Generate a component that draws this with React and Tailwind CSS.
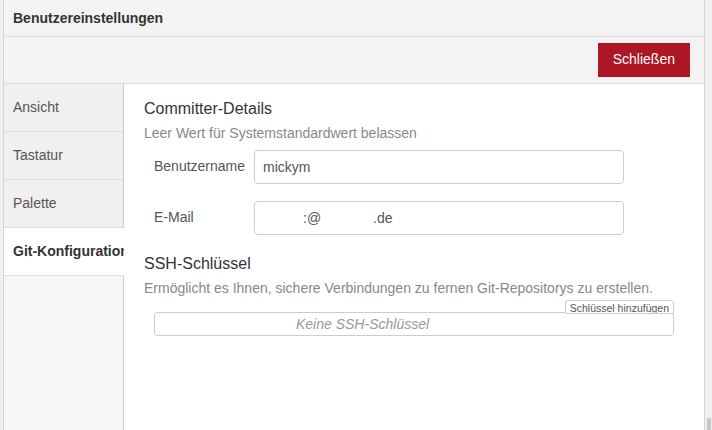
const TABS = ["Ansicht", "Tastatur", "Palette", "Git-Konfiguration"];

function Field({ label, value, children }) {
  return (
    <div className="flex items-start">
      <label className="w-[110px] pl-[10px] pt-[6px] text-[14px] text-[#555]">{label}</label>
      <div className="w-[370px] h-[34px] border border-[#ccc] rounded-[4px] bg-white flex items-center px-[8px] text-[14px] text-[#555]">
        {children || value}
      </div>
    </div>
  );
}

export default function App() {
  const active = "Git-Konfiguration";
  return (
    <div
      className="w-[712px] h-[430px] bg-[#f0f0f0] flex overflow-hidden"
      style={{ fontFamily: '"Liberation Sans", Arial, sans-serif' }}
    >
      <div className="ml-[3px] w-[702px] h-full border-l border-r border-[#d4d4d4] flex flex-col bg-white">
        {/* Header */}
        <div className="h-[37px] bg-[#f3f3f3] border-b border-[#ddd] flex items-center px-[9px] shrink-0">
          <span className="text-[14px] font-bold text-[#333]">Benutzereinstellungen</span>
        </div>

        {/* Toolbar */}
        <div className="h-[47px] bg-[#f3f3f3] border-b border-[#ddd] flex items-center justify-end pr-[14px] shrink-0">
          <button className="h-[34px] px-[15px] bg-[#ad1625] text-white text-[14px] mt-[-1px]">
            Schließen
          </button>
        </div>

        {/* Body */}
        <div className="flex flex-1 min-h-0">
          <div className="w-[120px] bg-[#f7f7f7] border-r border-[#ccc] shrink-0 flex flex-col">
            {TABS.map((t) => (
              <div
                key={t}
                className={`h-[48px] flex items-center pl-[9px] border-b border-[#ddd] whitespace-nowrap overflow-hidden text-[14px] ${
                  t === active
                    ? "bg-white text-[#333] font-bold mr-[-1px]"
                    : "bg-[#f0f0f0] text-[#555]"
                }`}
              >
                {t}
              </div>
            ))}
          </div>

          <div className="flex-1 pl-[20px] pr-[30px] pt-[15px]">
            <h2 className="text-[16px] text-[#333] leading-[20px]">Committer-Details</h2>
            <p className="text-[14px] text-[#888] mt-[6px] leading-[16px]">
              Leer Wert für Systemstandardwert belassen
            </p>
            <div className="mt-[9px] flex flex-col gap-[17px]">
              <Field label="Benutzername" value="mickym" />
              <Field label="E-Mail">
                <span className="pl-[40px]">:@</span>
                <span className="pl-[52px]">.de</span>
              </Field>
            </div>

            <h2 className="text-[16px] text-[#333] leading-[20px] mt-[19px]">SSH-Schlüssel</h2>
            <p className="text-[14px] text-[#888] mt-[6px] leading-[16px] whitespace-nowrap">
              Ermöglicht es Ihnen, sichere Verbindungen zu fernen Git-Repositorys zu erstellen.
            </p>
            <div className="ml-[10px] w-[520px] mt-[4px]">
              <div className="flex justify-end h-[12px]">
                <div className="h-[14px] px-[4px] border border-[#ccc] rounded-t-[3px] bg-white text-[10.5px] leading-[14px] text-[#555] overflow-hidden whitespace-nowrap">
                  Schlüssel hinzufügen
                </div>
              </div>
              <div className="h-[24px] border border-[#ccc] rounded-[4px] bg-white flex items-center pl-[141px] text-[14px] italic text-[#999]">
                Keine SSH-Schlüssel
              </div>
            </div>
          </div>
        </div>
      </div>
      <div className="flex-1 relative">
        <div className="absolute bottom-0 left-[2px] w-[4px] h-[12px] bg-[#c8c8c8]" />
      </div>
    </div>
  );
}
